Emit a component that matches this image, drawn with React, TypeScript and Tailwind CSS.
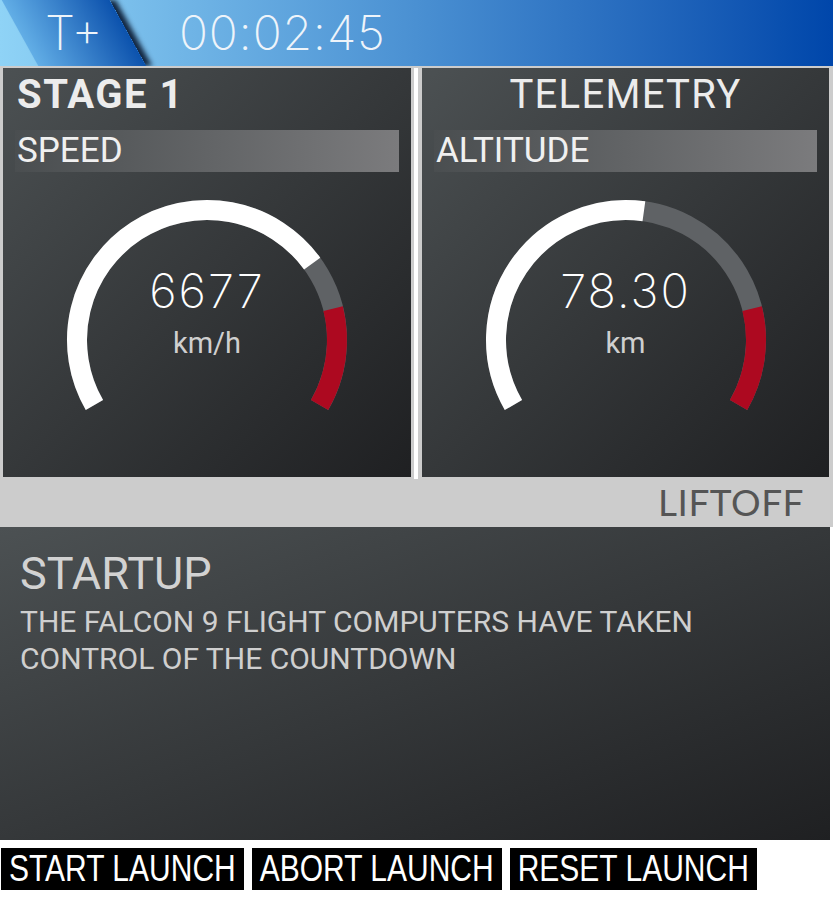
import React from "react";

type GaugeData = {
  title: string;
  titleBold: boolean;
  label: string;
  value: string;
  unit: string;
  fraction: number;
};

const GAUGES: GaugeData[] = [
  { title: "STAGE 1", titleBold: true, label: "SPEED", value: "6677", unit: "km/h", fraction: 0.725 },
  { title: "TELEMETRY", titleBold: false, label: "ALTITUDE", value: "78.30", unit: "km", fraction: 0.533 },
];

const ARC_START = -120;
const ARC_END = 120;
const RED_FROM = 76;

const polar = (cx: number, cy: number, r: number, deg: number) => {
  const rad = (deg * Math.PI) / 180;
  return [cx + r * Math.sin(rad), cy - r * Math.cos(rad)];
};

const arc = (cx: number, cy: number, r: number, from: number, to: number) => {
  const [x0, y0] = polar(cx, cy, r, from);
  const [x1, y1] = polar(cx, cy, r, to);
  const large = to - from > 180 ? 1 : 0;
  return `M ${x0} ${y0} A ${r} ${r} 0 ${large} 1 ${x1} ${y1}`;
};

const Dial = ({ fraction, value, unit }: { fraction: number; value: string; unit: string }) => {
  const angle = ARC_START + (ARC_END - ARC_START) * fraction;
  return (
    <div className="relative mx-auto mt-[18px] h-[240px] w-[300px]">
      <svg width="300" height="240" viewBox="0 0 300 240" className="absolute inset-0">
        <path d={arc(150, 150, 130, ARC_START, ARC_END)} stroke="#5f6265" strokeWidth="20" fill="none" />
        <path d={arc(150, 150, 130, ARC_START, angle)} stroke="#ffffff" strokeWidth="20" fill="none" />
        <path d={arc(150, 150, 130, RED_FROM, ARC_END)} stroke="#ad0920" strokeWidth="20" fill="none" />
      </svg>
      <div className="relative flex flex-col items-center pt-[77px]">
        <span className="font-['Inter',sans-serif] text-[47px] leading-[47px] font-extralight tracking-[2px] text-white">
          {value}
        </span>
        <span className="mt-[15px] text-[29px] leading-[29px] text-[#cfcfcf]">{unit}</span>
      </div>
    </div>
  );
};

const Panel = ({ data, width }: { data: GaugeData; width: string }) => (
  <div className={`${width} h-[409px] bg-linear-to-br from-[#4c5153] via-[#35383a] to-[#1f2022] px-3 pt-[3px]`}>
    <h2
      className={
        data.titleBold
          ? "pl-[2px] text-[40px] leading-[48px] font-bold tracking-[1.5px] text-[#ececec]"
          : "text-center text-[40px] leading-[48px] tracking-[1.3px] text-[#ececec]"
      }>
      {data.title}
    </h2>
    <div className="mt-[11px] flex h-[42px] items-center bg-linear-to-r from-[#4a4e50] to-[#7b7b7d] pl-[2px] text-[35px] text-[#f0f0f0]">
      {data.label}
    </div>
    <Dial fraction={data.fraction} value={data.value} unit={data.unit} />
  </div>
);

export default function App() {
  return (
    <div className="w-[833px] bg-white font-['Roboto',sans-serif]">
      <header className="flex h-[66px] items-center overflow-hidden bg-linear-to-r from-[#8fd3f6] via-[#4a90d2] to-[#0046aa]">
        <div className="ml-[20px] flex h-full w-[108px] skew-x-[29deg] items-center justify-center bg-linear-to-r from-[#62aee6] to-[#0b52ad] shadow-[6px_0_5px_rgba(0,12,34,0.85)]">
          <span className="-skew-x-[29deg] font-['Inter',sans-serif] text-[48px] leading-none font-extralight text-[#eef4fa]">
            T+
          </span>
        </div>
        <span className="ml-[51px] font-['Inter',sans-serif] text-[48px] leading-none font-extralight tracking-[0.8px] text-[#eef4fa]">
          00:02:45
        </span>
      </header>

      <div className="bg-[#cccccc] pt-[2px]">
        <div className="flex items-start">
          <div className="w-[3px]" />
          <Panel data={GAUGES[0]} width="w-[408px]" />
          <div className="w-[3px]" />
          <div className="h-[411px] w-[4px] bg-white" />
          <div className="w-[4px]" />
          <Panel data={GAUGES[1]} width="w-[407px]" />
        </div>
        <div className="-mt-[2px] flex h-[50px] items-center justify-end pr-[29px] font-['Lato',sans-serif] text-[37px] tracking-[0.5px] text-[#555555]">
          LIFTOFF
        </div>
      </div>

      <section className="h-[313px] w-[830px] bg-linear-to-br from-[#4c5153] via-[#35383a] to-[#1f2022] px-5 pt-5">
        <h3 className="text-[45px] leading-[54px] text-[#d2d2d2]">STARTUP</h3>
        <p className="mt-[2px] text-[30px] leading-[37px] text-[#cfcfcf]">
          THE FALCON 9 FLIGHT COMPUTERS HAVE TAKEN CONTROL OF THE COUNTDOWN
        </p>
      </section>

      <div className="mt-2 flex gap-2 pb-[10px] pl-[1px]">
        {["START LAUNCH", "ABORT LAUNCH", "RESET LAUNCH"].map((label) => (
          <button
            key={label}
            className="flex h-[42px] items-center bg-black px-[8px] font-['Liberation_Sans',Arial,sans-serif] text-[30px] leading-none whitespace-nowrap text-white">
            <span className="inline-block scale-y-[1.2]">{label}</span>
          </button>
        ))}
      </div>
    </div>
  );
}
